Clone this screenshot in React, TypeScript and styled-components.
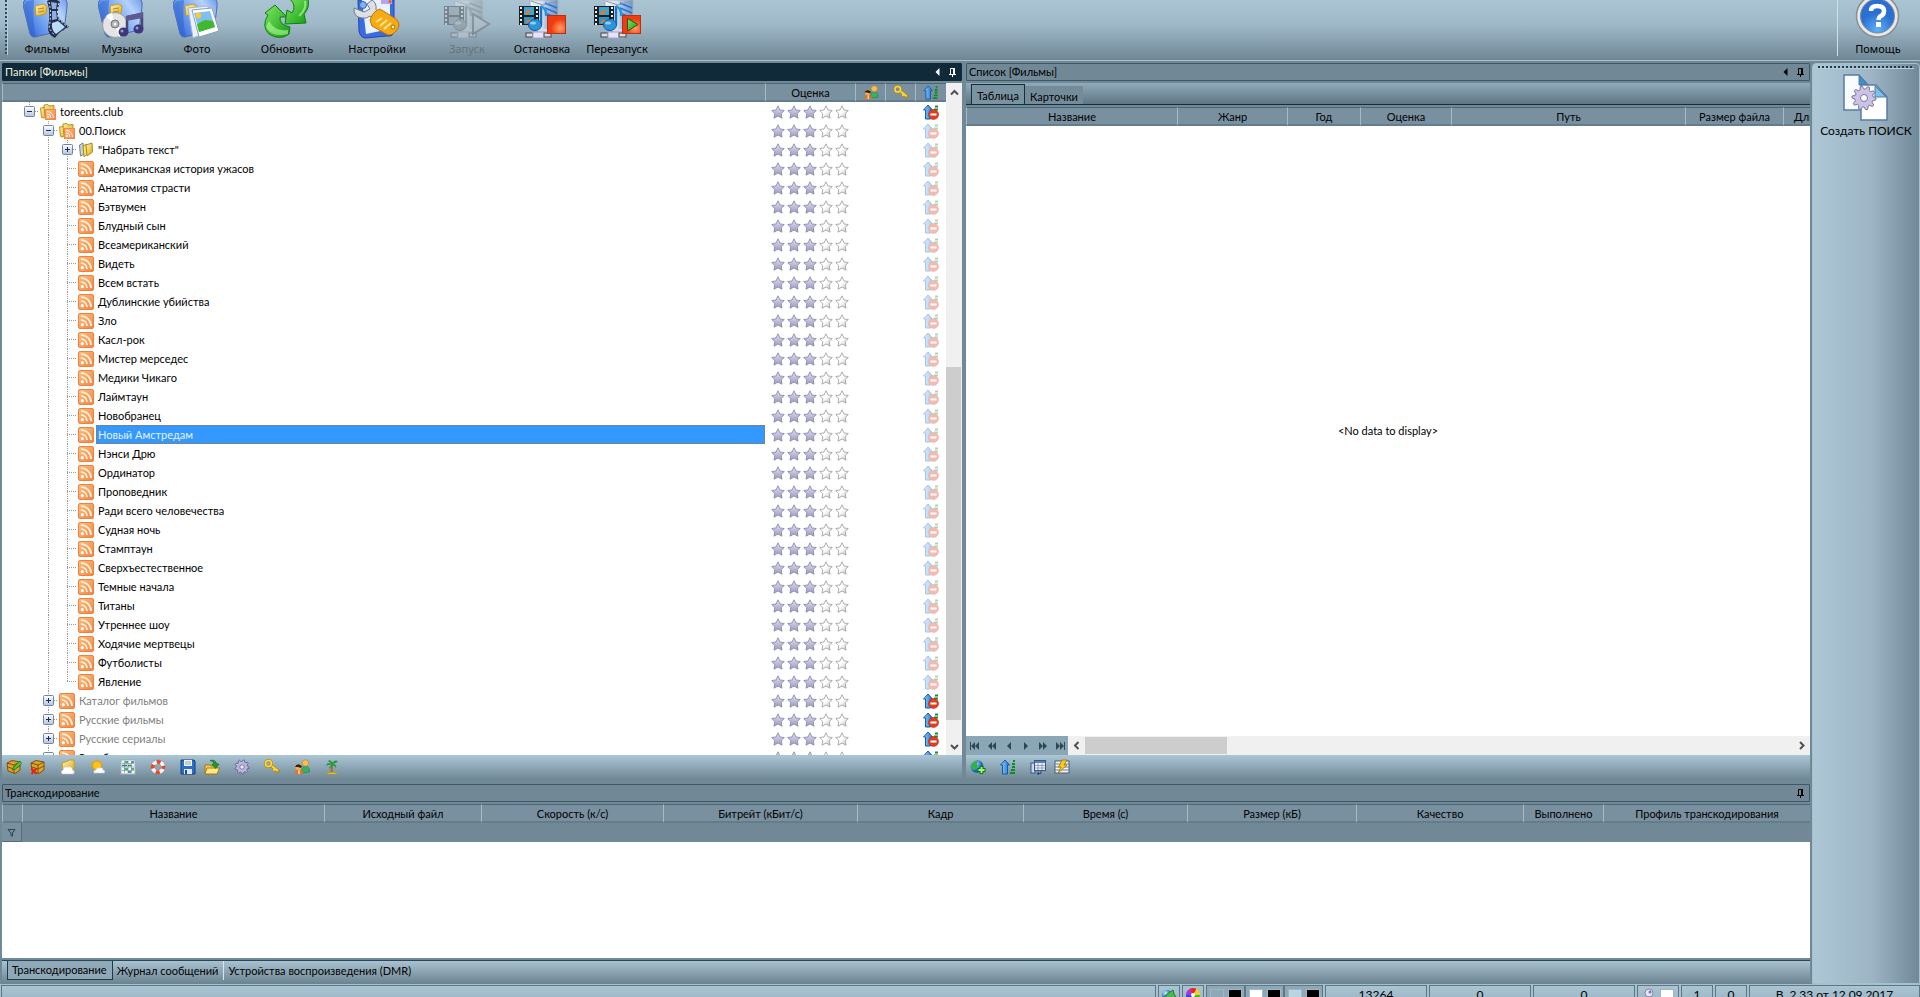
import React from 'react';
import styled, { createGlobalStyle, css } from 'styled-components';

const Global = createGlobalStyle`
  * { box-sizing: border-box; }
  body { margin: 0; overflow: hidden; background: #708897; }
  body, button, table, input { font-family: Lato, Tahoma, sans-serif; font-size: 11px; line-height: 14px; color: #000; }
  button { border: 0; padding: 0; margin: 0; background: none; }
  table { border-collapse: separate; border-spacing: 0; table-layout: fixed; }
  th { font-weight: normal; }
  th, td { padding: 0; }
`;

const mid = '#718997';

/* ---------- layout ---------- */
const Page = styled.div`
  display: flex;
  flex-direction: column;
  height: 100vh;
  background: ${mid};
`;
const Toolbar = styled.header`
  display: flex;
  flex: none;
  gap: 15px;
  height: 61px;
  padding: 0 0 0 5px;
  background: linear-gradient(#abc4d3, #a0b9c9 40%, #6f8795);
  border-bottom: 1px solid #a6c2d2;
`;
const Grip = styled.div`
  width: 3px;
  height: 55px;
  margin-right: -13px;
  border-right: 1px solid #b7cedb;
  background: repeating-linear-gradient(#2f4a5a 0 2px, transparent 2px 4px);
`;
const Group = styled.div`
  display: flex;
`;
const HelpGroup = styled.div`
  display: flex;
  height: 56px;
  margin-left: auto;
  padding: 0 4px 0 3px;
  border-left: 1px solid #cfdfe8;
`;
const BigButton = styled.button`
  display: flex;
  flex-direction: column;
  align-items: center;
  width: 74px;
  margin-right: 1px;
  font-family: "Noto Sans", sans-serif;
  white-space: nowrap;
  svg { display: block; margin-bottom: 2px; }
  &:disabled { color: #68747a; }
`;
const Body = styled.div`
  display: flex;
  flex: 1;
  min-height: 0;
`;
const Work = styled.main`
  display: flex;
  flex-direction: column;
  flex: 1;
  min-width: 0;
  padding: 2px 2px 0 2px;
`;
const Sidebar = styled.aside`
  display: flex;
  flex-direction: column;
  align-items: center;
  width: 108px;
  margin-top: 2px;
  padding: 2px;
  border: 1px solid #a5c0cf;
  border-radius: 4px 4px 0 0;
  background: linear-gradient(to right, #adc7d6, #9db5c4 55%, #708897);
`;
const SideGrip = styled.div`
  flex: none;
  width: 96px;
  height: 3px;
  margin-bottom: 5px;
  border-bottom: 1px solid #b7cedb;
  background: repeating-linear-gradient(to right, #1f3a4a 0 2px, transparent 2px 4px);
`;
const SideButton = styled.button`
  display: flex;
  flex-direction: column;
  align-items: center;
  gap: 2px;
  font-size: 12px;
  white-space: nowrap;
`;
const Upper = styled.div`
  display: grid;
  grid-template-columns: 960fr 844fr;
  column-gap: 4px;
  flex: 1;
  min-height: 0;
`;
const Panel = styled.section`
  display: flex;
  flex-direction: column;
  min-width: 0;
  min-height: 0;
`;
const PanelTitle = styled.div<{ $active?: boolean }>`
  display: flex;
  flex: none;
  align-items: center;
  gap: 8px;
  height: 18px;
  margin-bottom: 2px;
  padding: 0 4px 0 2px;
  border: 1px solid ${p => (p.$active ? '#102a3a' : '#3f5867')};
  border-radius: 1px;
  background: ${p => (p.$active ? '#102a3a' : mid)};
  color: ${p => (p.$active ? '#f2f0dc' : '#000')};
  h2 { flex: 1; margin: 0; font-size: 11px; font-weight: normal; }
  button { display: flex; color: ${p => (p.$active ? '#fff' : '#000')}; }
`;
const Split = styled.div`
  display: flex;
  flex: 1;
  min-height: 0;
  background: #fff;
`;
const Clip = styled.div<{ $fill?: boolean }>`
  flex: ${p => (p.$fill ? '1' : 'none')};
  min-width: 0;
  min-height: 0;
  overflow: hidden;
  background: #fff;
`;
const Grid = styled.table<{ $overhang?: boolean }>`
  width: ${p => (p.$overhang ? 'calc(100% + 67px)' : '100%')};
`;
const Col = styled.col<{ $w?: string }>`
  width: ${p => p.$w ?? 'auto'};
`;
const Head = styled.th`
  height: 19px;
  padding-top: 1px;
  border-top: 1px solid #4e6776;
  border-bottom: 2px solid #647d8c;
  border-left: 1px solid #a3bac7;
  background: #78909f;
  white-space: nowrap;
  overflow: hidden;
  svg { display: block; height: 15px; margin: 0 auto; }
`;
const TreeRow = styled.tr`
  height: 19px;
`;
const TreeCell = styled.div`
  display: flex;
  align-items: center;
  height: 19px;
  padding-left: 18px;
  svg { flex: none; display: block; }
`;
const Expander = styled.button`
  display: block;
  width: 19px;
  height: 19px;
`;
const NodeIcon = styled.span`
  display: block;
  width: 19px;
  padding-left: 1px;
`;
const Label = styled.span<{ $selected?: boolean; $dim?: boolean }>`
  flex: 1;
  height: 19px;
  padding-left: 1px;
  line-height: 17px;
  border: 1px dotted transparent;
  white-space: nowrap;
  color: ${p => (p.$dim ? '#808080' : '#000')};
  ${p => p.$selected && css`
    background: #3399ff;
    border-color: #b86a20;
    color: #e6f1ff;
  `}
`;
const Stars = styled.div`
  display: flex;
  gap: 2px;
  padding: 2px 0 0 6px;
`;
const Share = styled.div<{ $faded?: boolean }>`
  padding-left: 8px;
  opacity: ${p => (p.$faded ? 0.35 : 1)};
  svg { display: block; }
`;
const VScroll = styled.div`
  display: flex;
  flex-direction: column;
  width: 16px;
  background: #f0f0f0;
  button { display: flex; align-items: center; justify-content: center; height: 18px; }
`;
const VTrack = styled.div`
  flex: 1;
  padding: 0 1px 0 0;
  display: flex;
  flex-direction: column;
  &::before { content: ''; flex: 269; }
  &::after { content: ''; flex: 17; }
`;
const Thumb = styled.div`
  flex: 357;
  background: #cdcdcd;
`;
const SmallBar = styled.div`
  display: flex;
  flex: none;
  gap: 6px;
  height: 24px;
  margin-bottom: 5px;
  background: linear-gradient(#abc6d5, ${mid});
`;
const SmallButton = styled.button`
  display: flex;
  align-items: center;
  justify-content: center;
  width: 24px;
`;
const TopTabs = styled.div`
  display: flex;
  flex: none;
  align-items: flex-end;
  height: 22px;
  margin-bottom: 2px;
  padding-left: 5px;
  border-bottom: 1px solid #12303f;
  background: linear-gradient(#8faaba, #5f7785);
`;
const TopTab = styled.button<{ $active?: boolean }>`
  height: ${p => (p.$active ? 20 : 18)}px;
  padding: 2px ${p => (p.$active ? 5 : 4)}px 0;
  background: ${p => (p.$active ? '#7a93a1' : '#748c9a')};
  border: 1px solid ${p => (p.$active ? '#12303f' : 'transparent')};
  border-bottom: 0;
`;
const Empty = styled.div`
  display: flex;
  flex: 1;
  align-items: center;
  justify-content: center;
  background: #fff;
`;
const HBar = styled.div`
  display: flex;
  flex: none;
  height: 19px;
  background: #f0f0f0;
`;
const Pager = styled.div`
  display: flex;
  width: 102px;
  background: #8ba6b5;
  button { flex: 1; display: flex; align-items: center; justify-content: center; }
`;
const HScroll = styled.div`
  display: flex;
  flex: 1;
  button { display: flex; align-items: center; justify-content: center; width: 17px; }
`;
const HTrack = styled.div`
  flex: 1;
  padding: 1px 0;
`;
const HThumb = styled.div`
  width: 20%;
  height: 17px;
  background: #cdcdcd;
`;
const Lower = styled(Panel)`
  flex: none;
`;
const FilterCell = styled.td`
  height: 19px;
  background: #78909f;
  border-right: 1px solid #566e7c;
  border-bottom: 1px solid #566e7c;
  svg { display: block; margin: 0 auto; }
`;
const FilterRest = styled.td`
  background: ${mid};
`;
const Blank = styled.div`
  height: 116px;
  background: #fff;
`;
const BottomTabs = styled.div`
  display: flex;
  height: 24px;
  margin-top: 2px;
  padding-left: 5px;
  border-top: 1px solid #2b4656;
  background: linear-gradient(#a9c2d1, #6b8290);
`;
const BottomTab = styled.button<{ $active?: boolean; $divided?: boolean }>`
  height: 19px;
  padding: 0 5px 0 4px;
  background: ${p => (p.$active ? '#8fa9b8' : 'none')};
  border: solid #1d3a4a;
  border-width: ${p => (p.$active ? '0 1px 1px' : '0')};
  ${p => p.$divided && css`border-left: 1px solid #d5e6ef;`}
`;
const Status = styled.footer`
  display: flex;
  flex: none;
  gap: 2px;
  height: 13px;
  padding: 1px 0 0 1px;
  overflow: hidden;
  background: #a5c0cf;
`;
const StatusCell = styled.div<{ $w?: number; $plain?: boolean }>`
  display: flex;
  align-items: flex-start;
  justify-content: center;
  gap: 4px;
  flex: ${p => (p.$w ? 'none' : '1')};
  width: ${p => (p.$w ? `${p.$w}px` : 'auto')};
  height: 20px;
  padding-top: 2px;
  border: 1px solid #5f7785;
  background: ${p => (p.$plain ? '#8ea8b7' : 'linear-gradient(#a9c4d3, #9ab3c2)')};
  font-size: 12px;
  white-space: nowrap;
  svg { flex: none; display: block; }
`;
const Swatches = styled.div`
  display: flex;
`;
const Swatch = styled.span<{ $c: string }>`
  width: 14px;
  height: 14px;
  margin-top: 1px;
  border: 1px solid #9db7c5;
  background: ${p => p.$c};
`;
const HiddenSvg = styled.svg`
  position: absolute;
  width: 0;
  height: 0;
`;
const GreySvg = styled.svg`
  filter: grayscale(1);
  opacity: 0.35;
`;

/* ---------- icons ---------- */
const Defs = () => (
  <HiddenSvg aria-hidden="true">
    <defs>
      <linearGradient id="folder" x1="0" y1="0.6" x2="1" y2="0"><stop offset="0" stopColor="#3d70dc" /><stop offset="0.3" stopColor="#6c9ff0" /><stop offset="0.7" stopColor="#b4d2fa" /><stop offset="1" stopColor="#6b98e8" /></linearGradient>
      <linearGradient id="orange" x1="0" y1="0" x2="1" y2="1"><stop offset="0" stopColor="#fdc07c" /><stop offset="1" stopColor="#f58440" /></linearGradient>
      <linearGradient id="yellow" x1="0" y1="0" x2="1" y2="1"><stop offset="0" stopColor="#fff6b0" /><stop offset="1" stopColor="#dca61c" /></linearGradient>
      <linearGradient id="green" x1="0" y1="0" x2="1" y2="1"><stop offset="0" stopColor="#7fe860" /><stop offset="1" stopColor="#129a14" /></linearGradient>
      <linearGradient id="star" x1="0" y1="0" x2="0" y2="1"><stop offset="0" stopColor="#e2e2f0" /><stop offset="1" stopColor="#9a9ac6" /></linearGradient>
      <linearGradient id="starOff" x1="0" y1="0" x2="1" y2="1"><stop offset="0.5" stopColor="#ffffff" /><stop offset="1" stopColor="#b9b9b9" /></linearGradient>
      <linearGradient id="arrow" x1="0" y1="0" x2="1" y2="0"><stop offset="0" stopColor="#8fd4ff" /><stop offset="1" stopColor="#1d6fd0" /></linearGradient>
      <linearGradient id="server" x1="0" y1="0" x2="1" y2="0"><stop offset="0" stopColor="#eef3f8" /><stop offset="0.45" stopColor="#d5dee8" /><stop offset="0.55" stopColor="#a8c8ee" /><stop offset="1" stopColor="#6f93c4" /></linearGradient>
      <linearGradient id="box" x1="0" y1="0" x2="0" y2="1"><stop offset="0" stopColor="#fff" /><stop offset="1" stopColor="#b4c4dc" /></linearGradient>
      <radialGradient id="red" cx="0.7" cy="0.7"><stop offset="0" stopColor="#ffa06a" /><stop offset="1" stopColor="#f03c10" /></radialGradient>
      <radialGradient id="help" cx="0.5" cy="0.9"><stop offset="0" stopColor="#5fb2f8" /><stop offset="1" stopColor="#2b6fd2" /></radialGradient>
      <radialGradient id="globe" cx="0.35" cy="0.3"><stop offset="0" stopColor="#bff0ff" /><stop offset="1" stopColor="#1a69b8" /></radialGradient>
    </defs>
  </HiddenSvg>
);

const Big = ({ children }: { children: React.ReactNode }) => (
  <svg width="48" height="40" viewBox="0 0 48 40" aria-hidden="true">{children}</svg>
);
const FolderBase = () => (
  <>
    <path d="M1 1 Q2 0 6 -2 H42 Q45 2 44 7 L41 30 L12 37 Q9 38 7 34 L0 5Z" fill="url(#folder)" stroke="#4a6cb8" />
    <path d="M1 5 L8 35 L13 37 Q9 20 11 0 L4 1Z" fill="#2d5fcb" opacity="0.5" />
    <path d="M12 6 L20 4 L24 6 L23 14 L13 16Z" fill="url(#yellow)" stroke="#c79a2c" />
    <path d="M15 9 L21 8 M15 12 L21 11" stroke="#b98a20" />
  </>
);
const FilmsIcon = () => (
  <Big>
    <FolderBase />
    <path d="M24 1 Q31 -3 37 2 Q33 12 36 19 L46 27 Q37 30 32 38 Q25 35 25 28 Q28 12 24 1Z" fill="#252e48" />
    <path d="M28 2 L34 3 L33 9 L29 9Z M29 11 L33 11 L34 19 L29 20Z" fill="#8bb0ea" />
    <path d="M29 23 L35 21 L42 27 L33 34 Q28 30 29 23Z" fill="#b9dcf8" />
    <path d="M26 2 Q29 14 26 28 L32 36 M36 3 Q33 12 36 20 L45 27" stroke="#e6eef8" strokeWidth="1" strokeDasharray="2 2" fill="none" />
  </Big>
);
const MusicIcon = () => (
  <Big>
    <FolderBase />
    <circle cx="17" cy="25" r="12.5" fill="#e4e4e4" stroke="#9a9a9a" />
    <path d="M17 25 L8 16 A12 12 0 0 1 14 13Z M17 25 L27 33 A12 12 0 0 1 21 37Z" fill="#fff" />
    <circle cx="17" cy="24" r="4" fill="#aab4ba" stroke="#777" /><circle cx="17" cy="24" r="1.5" fill="#f4f4f4" />
    <path d="M29 32 V17 L44 14 V29" fill="none" stroke="#4a4878" strokeWidth="2.5" />
    <path d="M28 16 L45 12 V18 L28 21Z" fill="#5c5a8e" />
    <ellipse cx="25.5" cy="32" rx="5" ry="4.5" fill="#3a3878" /><ellipse cx="40.5" cy="29" rx="5" ry="4.5" fill="#3a3878" />
    <circle cx="24" cy="31" r="1.5" fill="#9a9ada" /><circle cx="39" cy="28" r="1.5" fill="#9a9ada" />
  </Big>
);
const PhotoIcon = () => (
  <Big>
    <FolderBase />
    <path d="M15 8 L35 6 L38 31 L20 38Z" fill="#e9f1fb" stroke="#a8b6c8" />
    <path d="M19 10 L39 8 L46 31 L26 37Z" fill="#fff" stroke="#8f9fb6" />
    <path d="M21 13 L37 11 L42 27 L26 32Z" fill="#7cc0f4" />
    <path d="M24 24 L32 20 L40 21 L42 27 L26 32Z" fill="#41b82e" />
    <circle cx="25.5" cy="15.5" r="2.8" fill="#ffc928" />
  </Big>
);
const RefreshIcon = () => (
  <Big>
    <path d="M2 13 L12 5 L24 17 L17 17 Q16 25 27 27 L26 34 Q17 41 6 34 Q-2 26 5 15Z" fill="url(#green)" stroke="#0d7f12" />
    <path d="M27 -1 H45 Q47 8 41 14 L43 23 L22 24 L24 10 L29 13 Q34 6 27 -1Z" fill="url(#green)" stroke="#0d7f12" />
    <path d="M3 27 Q9 38 25 34 L25 30 Q12 32 6 21Z" fill="#b8fa9a" opacity="0.6" />
    <path d="M42 1 Q44 9 36 16" stroke="#c4ffa8" strokeWidth="2" fill="none" opacity="0.6" />
  </Big>
);
const SettingsIcon = () => (
  <Big>
    <path d="M5 0 H41 V30 Q41 37 34 36 L12 38 Q7 37 6 31Z" fill="#3b6be0" stroke="#2148ae" />
    <path d="M9 0 H37 V29 L13 34Z" fill="#e9f2ff" />
    <path d="M28 0 H39 V4 H28Z" fill="#b8a4ee" /><circle cx="37" cy="1.5" r="1.5" fill="#f4512c" />
    <path d="M1 8 Q0 17 9 18 Q14 19 17 16 L28 25 L33 19 L23 10 Q24 3 19 0 L14 4 L17 9 L11 12Z" fill="#dde0e4" stroke="#747d88" />
    <circle cx="10" cy="5" r="3.5" fill="#7fb3f3" stroke="#3c63a8" />
    <path d="M17 20 Q20 11 27 9 L43 19 Q49 25 43 31 Q38 37 33 34 L19 26Z" fill="#f8a914" stroke="#b87606" />
    <path d="M23 22 L29 18 M27 26 L34 20 M31 29 L38 23" stroke="#ffe890" strokeWidth="2" />
    <circle cx="40" cy="27" r="2" fill="#fff0b8" stroke="#a86d08" />
  </Big>
);
const ServerBase = () => (
  <>
    <path d="M12 0 H40 V26 L33 32 H20 L12 27Z" fill="url(#server)" stroke="#a5afbc" />
    <path d="M27 3 L39 8 M27 8 L39 13 M27 13 L39 18" stroke="#2b73cc" strokeWidth="1.5" />
    <path d="M13 1 L25 5 L39 1" stroke="#8d9aa8" fill="none" />
    <rect x="1" y="6" width="20" height="19" fill="#1b1e22" />
    <path d="M3 7 V25 M19 7 V25" stroke="#e8eef2" strokeWidth="2" strokeDasharray="2 2" />
    <rect x="6" y="7" width="10" height="8" fill="#3ca7d4" /><rect x="6" y="17" width="10" height="7" fill="#3295c8" />
    <path d="M7 14 Q10 7 15 12 L12 11 L10 15Z M7 23 Q11 17 15 22Z" fill="#e97a23" />
    <path d="M23 6 L23 25" stroke="#1676c4" strokeWidth="2.5" /><path d="M23 6 Q29 9 28 16" stroke="#2a94de" strokeWidth="2.5" fill="none" />
    <ellipse cx="17" cy="25" rx="6.5" ry="5.5" fill="#2d93dc" stroke="#155f9f" /><ellipse cx="15" cy="23" rx="3" ry="1.5" fill="#8bd0fa" />
    <path d="M22 29 H31 V38 H22Z" fill="#dcd9f0" />
    <rect x="8" y="33" width="7" height="4" fill="#d8dde2" stroke="#444" /><rect x="15" y="32" width="17" height="6" fill="#e6e3f8" stroke="#a7a4c4" /><rect x="26" y="33" width="7" height="4" fill="#d8dde2" stroke="#444" />
  </>
);
const StartIcon = () => (
  <GreySvg width="48" height="40" viewBox="0 0 48 40" aria-hidden="true">
    <ServerBase /><path d="M30 14 L46 24 L30 34Z" fill="#c0c8cc" stroke="#555" strokeWidth="2" />
  </GreySvg>
);
const StopIcon = () => (
  <Big><ServerBase /><rect x="29.5" y="15.5" width="18" height="18" fill="url(#red)" stroke="#b93210" /></Big>
);
const RestartIcon = () => (
  <Big><ServerBase /><rect x="29.5" y="15.5" width="18" height="18" fill="url(#red)" stroke="#b93210" /><path d="M34.5 18.500 L45 24.500 L34.500 31Z" fill="url(#green)" stroke="#34500c" /></Big>
);
const HelpIcon = () => (
  <Big>
    <circle cx="23.5" cy="16" r="21" fill="#e8e8e6" stroke="#8a8f92" strokeWidth="1.5" />
    <circle cx="23.5" cy="16" r="17" fill="url(#help)" stroke="#7d8a9a" />
    <path d="M17 11 Q17 6 23 6 Q30 6 30 11 Q30 15 26 16.500 Q24.500 18 24.500 20" fill="none" stroke="#fff" strokeWidth="4.5" />
    <rect x="22" y="22" width="5" height="5" fill="#fff" />
  </Big>
);
const gearPath = (cx: number, cy: number, r: number, inner: number, teeth: number) => {
  const pts: string[] = [];
  for (let i = 0; i < teeth * 4; i++) {
    const a = (i / (teeth * 4)) * Math.PI * 2;
    const rad = i % 4 < 2 ? r : inner;
    pts.push(`${(cx + Math.cos(a) * rad).toFixed(1)} ${(cy + Math.sin(a) * rad).toFixed(1)}`);
  }
  return `M${pts.join('L')}Z`;
};
const SearchDocIcon = () => (
  <svg width="46" height="48" viewBox="0 0 46 48" aria-hidden="true">
    <path d="M1 1 H16 L25 11 V36 H1Z" fill="#f8fbff" stroke="#557ca6" strokeWidth="1.5" />
    <path d="M16 1 V11 H25Z" fill="#3d8fc8" stroke="#557ca6" />
    <path d="M18 11 H33 L44 23 V46 H18Z" fill="#fff" stroke="#557ca6" strokeWidth="1.5" />
    <path d="M32 12 V23 H43Z" fill="#79c2ea" stroke="#557ca6" />
    <path d={gearPath(21, 24, 12, 9, 10)} fill="#c9c4e4" stroke="#7a74a0" />
    <circle cx="21" cy="24" r="3.5" fill="#fff" stroke="#7a74a0" />
  </svg>
);

const S = ({ children }: { children: React.ReactNode }) => (
  <svg width="16" height="16" viewBox="0 0 16 16" aria-hidden="true">{children}</svg>
);
const Rss = () => (
  <S>
    <rect x="0.5" y="0.5" width="15" height="15" rx="1.5" fill="url(#orange)" stroke="#ee8240" />
    <circle cx="4.3" cy="11.7" r="1.6" fill="#fff" />
    <path d="M3 7 A6 6 0 0 1 9 13 M3 3 A10 10 0 0 1 13 13" fill="none" stroke="#fff4e4" strokeWidth="1.7" />
  </S>
);
const RssFolder = () => (
  <S>
    <path d="M0.5 4 L4 3.500 V1 L8 0.500 L9 2 L14 1.500 V8 L4 14 L1.500 13.500Z" fill="url(#yellow)" stroke="#c28f16" />
    <path d="M4 3 L5 13" stroke="#c28f16" />
    <rect x="5.5" y="5.5" width="10" height="10" fill="url(#orange)" stroke="#ee8a4c" />
    <circle cx="8" cy="13" r="1" fill="#fff" />
    <path d="M7 10 A4 4 0 0 1 11 14 M7 7.500 A6.500 6.500 0 0 1 13.500 14" fill="none" stroke="#fff" />
  </S>
);
const DocFolder = () => (
  <S>
    <path d="M1.5 3 L5 1 L6 12 L2.500 14Z" fill="#c9d4dc" stroke="#73828e" />
    <path d="M5 4 L9 2 V12 L6 15Z" fill="#f6e268" stroke="#ab8c18" />
    <path d="M8 3 L14 1 L14.500 10 L9 14Z" fill="url(#yellow)" stroke="#ab8c18" />
  </S>
);
const starD = 'M7 0.8 L9 5 L13.3 5.5 L10.2 8.6 L11 13.2 L7 11 L3 13.2 L3.8 8.6 L0.7 5.5 L5 5Z';
const Star = ({ on }: { on: boolean }) => (
  <svg width="14" height="15" viewBox="0 0 14 15" aria-hidden="true">
    <path d={starD} fill={on ? 'url(#star)' : 'url(#starOff)'} stroke={on ? '#8c8cab' : '#a5a5a5'} strokeWidth="0.9" strokeLinejoin="round" />
  </svg>
);
const UpArrow = () => <path d="M5 1 L9.5 6 H7.5 V15 H2.500 V6 H0.500Z" fill="url(#arrow)" stroke="#155ba5" />;
const ShareStop = () => (
  <S><UpArrow /><path d="M12 2.5 H15 M11 5.5 H15" stroke="#1d8a30" strokeWidth="2" />
    <circle cx="10.5" cy="10.5" r="5" fill="#dc3f22" stroke="#b52a12" strokeWidth="0.6" /><rect x="7.5" y="9.5" width="6" height="2" fill="#fff" /></S>
);
const Sort = () => (
  <S><UpArrow /><path d="M13 2 H15 M12 5 H15 M12 8 H15 M11 11 H15 M10 14 H15" stroke="#128a1e" strokeWidth="2" /></S>
);
const People = () => (
  <S>
    <path d="M8 14 Q7 7 12 7 Q16 8 15.5 13Z" fill="#36b06a" stroke="#1e7f45" strokeWidth="0.6" /><circle cx="11.5" cy="4" r="3.3" fill="#f3bd58" stroke="#b9801c" strokeWidth="0.6" />
    <path d="M1 15 Q1 10 5 10 Q9 10 9 15Z" fill="#e0761e" /><path d="M5 11 V15" stroke="#fff" /><circle cx="4.5" cy="8" r="3" fill="#f0ae58" /><path d="M1 8 Q3 3 8 7 L7 9 L4 8Z" fill="#2e2012" />
  </S>
);
const KeyIcon = () => (
  <S><path d="M7 6.5 L14 12 L12.5 13.5 M11 10 L9.5 12" stroke="#b88a10" strokeWidth="3.4" fill="none" /><path d="M7 6.5 L14 12 M11 10 L9.5 11.5" stroke="#f8d848" strokeWidth="2" fill="none" />
    <circle cx="4.5" cy="4.5" r="3" fill="none" stroke="#b88a10" strokeWidth="3" /><circle cx="4.5" cy="4.5" r="3" fill="none" stroke="#f8dc50" strokeWidth="1.6" /></S>
);
const Crate = ({ edit }: { edit?: boolean }) => (
  <S>
    <path d="M1 4 L6 1.5 L14 3 V11 L9 14.5 L2 12Z" fill="#e0a22a" stroke="#7d5208" />
    <path d="M1 4 L8 6 L14 3 M8 6 V14 M2 8 L8 10 L14 7" stroke="#7d5208" fill="none" />
    {edit ? <path d="M6 11 L8 8 L14 2 L15.5 4.5 L9.5 10Z" fill="#4fcb3c" stroke="#147a14" strokeWidth="0.8" />
      : <path d="M1.5 9.500 L6.500 15 M6.500 9.500 L1.500 15" stroke="#e32414" strokeWidth="2" />}
  </S>
);
const CloudFolder = () => (
  <S><path d="M2 4 L8 2 L9 1 L14 1 L14.5 10 L3 12Z" fill="url(#yellow)" stroke="#c49a2c" /><path d="M2 15 Q0 12 3 11 Q4 7 8 8 Q12 7 12.5 11 Q15.5 12 13.5 15Z" fill="#fff" stroke="#b8c4cc" strokeWidth="0.6" /></S>
);
const SunCloud = () => (
  <S><circle cx="7" cy="6.5" r="4.5" fill="#ffc414" stroke="#f09000" /><path d="M6 0 V1.5 M1 2 L2.5 3.5 M0 7 H1.5 M12 2 L11 3" stroke="#f0a010" /><path d="M4 14 Q3 11 6 11 Q7 8 10 9 Q13 8 13 11 Q16 12 14 14Z" fill="#fff" stroke="#c6d2da" strokeWidth="0.6" /></S>
);
const Calendar = () => (
  <S><rect x="1" y="1" width="14" height="14" fill="#f4f8fc" stroke="#9fb0bd" /><path d="M2 4.5 H14 M2 8 H14 M2 11.5 H14 M4.5 2 V14 M8 2 V14 M11.5 2 V14" stroke="#8096a5" strokeWidth="0.7" />
    <path d="M5 3 H8 M2 6.5 H4.5 M8 6.5 H11.5 M4.5 10 H8 M11.5 10 H14" stroke="#1d9a3c" strokeWidth="1.6" /><path d="M11.5 3 H14 M4.5 6.5 H7 M8 13 H11" stroke="#2866b8" strokeWidth="1.6" /></S>
);
const Lifebuoy = () => (
  <S><circle cx="8" cy="8" r="5.2" fill="none" stroke="#8a8f94" strokeWidth="4.6" /><circle cx="8" cy="8" r="5.2" fill="none" stroke="#f7f7f7" strokeWidth="3.8" /><circle cx="8" cy="8" r="5.2" fill="none" stroke="#e2492f" strokeWidth="3.8" strokeDasharray="4.08 4.08" strokeDashoffset="2" /></S>
);
const Disk = () => (
  <S><path d="M1 1 H14 L15 2 V15 H1Z" fill="#2b6fc4" stroke="#0f3e84" /><rect x="4" y="1" width="8" height="6" fill="#f4f8fc" /><path d="M5 3 H11 M5 5 H11" stroke="#8fa5b8" /><rect x="4" y="10" width="8" height="5" fill="#dfe8f0" /><rect x="5" y="11" width="2" height="4" fill="#1c4a90" /></S>
);
const OpenFolder = () => (
  <S><path d="M1 6 H6 L7 7 H13 V15 H1Z" fill="#f3cc50" stroke="#a87c0c" /><path d="M1 15 L3 9 H15.5 L13 15Z" fill="#fce888" stroke="#a87c0c" /><path d="M6 1.5 Q12 0 12.5 5 H15 L11.5 9.5 L8 5 H10 Q10 2 6 1.5Z" fill="#1f9a2c" stroke="#0c6a18" strokeWidth="0.6" /></S>
);
const Gear = () => (
  <S><path d={gearPath(8, 8, 7.2, 5.4, 9)} fill="#b9b8dc" stroke="#65639a" strokeWidth="0.9" /><circle cx="8" cy="8" r="2.2" fill="#e9f1f6" stroke="#65639a" strokeWidth="0.8" /></S>
);
const Palm = () => (
  <S><path d="M8 6 L7.5 14" stroke="#a86a1c" strokeWidth="2" /><path d="M2 15 Q8 11.5 14 15Z" fill="#f4cf3c" stroke="#bd9310" strokeWidth="0.6" /><path d="M8 5 Q3 2 2 7 Q5 5 8 6 Q5 7 5 10 Q7 8 8.5 6 Q11 7 12 9 Q13 5 9 5 Q13 3 14 3 Q12 0 8.5 3.5 Q6 0 4 2Z" fill="#1f9c3a" /></S>
);
const GlobeAdd = () => (
  <S><circle cx="7" cy="7.5" r="6.5" fill="url(#globe)" /><path d="M1 6 Q4 1 8 1.5 Q6 5 8 7 Q4 13 1.5 10Z" fill="#38b048" /><path d="M11.5 7 V15 M7.500 11 H15.500" stroke="#0f7a10" strokeWidth="3.8" /><path d="M11.500 8 V14 M8.500 11 H14.500" stroke="#a8f47c" strokeWidth="1.8" /></S>
);
const Columns = () => (
  <S><rect x="1" y="4" width="4" height="10" fill="#c8d6e8" stroke="#3c5488" /><rect x="4.5" y="1.5" width="11" height="10" fill="#f2f6fb" stroke="#3c5488" /><rect x="5" y="2" width="10" height="2" fill="#5f7fc0" /><path d="M8 4 V11 M12 4 V11 M5 6.500 H15 M5 9 H15" stroke="#6c7fa6" strokeWidth="0.7" /><path d="M11 12 V14.500 H7 M9 13 L7 14.500 L9 16" stroke="#22469a" fill="none" /></S>
);
const Bolt = () => (
  <S><rect x="1" y="2" width="14" height="12" fill="#f2f5f8" stroke="#4c5c70" /><path d="M1 5 H15 M1 8 H15 M1 11 H15" stroke="#6c7f90" /><path d="M8 1 H13 L10 6 H13 L4 14 L7 8 H4.500Z" fill="#fcc81c" stroke="#a87408" strokeWidth="0.8" /></S>
);
const Pin = () => <svg width="9" height="9" viewBox="0 0 9 9" aria-hidden="true"><path d="M2.5 6 V0.5 H6 V6 M1 6.5 H8 M4.5 7 V9" stroke="currentColor" fill="none" /><path d="M6 0 V6" stroke="currentColor" strokeWidth="2" /></svg>;
const Back = () => <svg width="5" height="8" viewBox="0 0 5 8" aria-hidden="true"><path d="M4.5 0 V8 L0.5 4Z" fill="currentColor" /></svg>;
const Chevron = ({ d }: { d: string }) => <svg width="9" height="9" viewBox="0 0 9 9" aria-hidden="true"><path d={d} fill="none" stroke="#505050" strokeWidth="2" /></svg>;
const PagerIcon = ({ d }: { d: string }) => <svg width="10" height="8" viewBox="0 0 10 8" aria-hidden="true"><path d={d} fill="#2f4858" /></svg>;

type GuideKind = 'blank' | 'line' | 'tee' | 'end';
const guideD: Record<GuideKind, string> = {
  blank: '',
  line: 'M9.5 0V19',
  tee: 'M9.5 0V19M9 9.5H19',
  end: 'M9.5 0V10M9 9.5H19',
};
const Guide = ({ kind, box }: { kind: GuideKind; box?: '+' | '-' }) => (
  <svg width="19" height="19" viewBox="0 0 19 19" aria-hidden="true">
    <path d={guideD[kind]} stroke="#9a9a9a" strokeDasharray="1 1" fill="none" />
    {box && <><rect x="4.5" y="4.5" width="10" height="10" rx="1" fill="url(#box)" stroke="#7184a4" />
      <path d={box === '+' ? 'M7 9.5H12M9.5 7V12' : 'M7 9.5H12'} stroke="#1c2c50" /></>}
  </svg>
);

/* ---------- data ---------- */
type Node = { name: string; guides: GuideKind[]; box?: '+' | '-'; icon: 'rss' | 'rssFolder' | 'doc'; dim?: boolean; solid?: boolean };
const shows = [
  'Американская история ужасов', 'Анатомия страсти', 'Бэтвумен', 'Блудный сын', 'Всеамериканский', 'Видеть', 'Всем встать',
  'Дублинские убийства', 'Зло', 'Касл-рок', 'Мистер мерседес', 'Медики Чикаго', 'Лаймтаун', 'Новобранец', 'Новый Амстредам',
  'Нэнси Дрю', 'Ординатор', 'Проповедник', 'Ради всего человечества', 'Судная ночь', 'Стамптаун', 'Сверхъестественное',
  'Темные начала', 'Титаны', 'Утреннее шоу', 'Ходячие мертвецы', 'Футболисты', 'Явление',
];
const nodes: Node[] = [
  { name: 'toreents.club', guides: ['end'], box: '-', icon: 'rssFolder', solid: true },
  { name: '00.Поиск', guides: ['blank', 'tee'], box: '-', icon: 'rssFolder' },
  { name: '"Набрать текст"', guides: ['blank', 'line', 'tee'], box: '+', icon: 'doc' },
  ...shows.map((name, i): Node => ({ name, guides: ['blank', 'line', i === shows.length - 1 ? 'end' : 'tee'], icon: 'rss' })),
  ...['Каталог фильмов', 'Русские фильмы', 'Русские сериалы'].map((name): Node => ({ name, guides: ['blank', 'tee'], box: '+', icon: 'rss', dim: true, solid: true })),
  { name: 'Зарубежные', guides: ['blank', 'tee'], box: '+', icon: 'rss', solid: true },
];
const nodeIcons = { rss: <Rss />, rssFolder: <RssFolder />, doc: <DocFolder /> };

const listCols: [string, string?][] = [['Название'], ['Жанр', '110px'], ['Год', '73px'], ['Оценка', '91px'], ['Путь', '234px'], ['Размер файла', '98px'], ['Длительность', '94px']];
const jobCols: [string, number][] = [['Название', 302], ['Исходный файл', 157], ['Скорость (к/с)', 182], ['Битрейт (кБит/с)', 194], ['Кадр', 166], ['Время (с)', 164], ['Размер (кБ)', 169], ['Качество', 167], ['Выполнено', 80], ['Профиль транскодирования', 207]];

const Tool = ({ label, icon, disabled }: { label: string; icon: React.ReactNode; disabled?: boolean }) => (
  <BigButton type="button" disabled={disabled}>{icon}{label}</BigButton>
);
const Mini = ({ items }: { items: [string, React.ReactNode][][] }) => (
  <SmallBar>
    {items.map((g, i) => (
      <Group key={i}>{g.map(([t, icon]) => <SmallButton type="button" key={t} aria-label={t}>{icon}</SmallButton>)}</Group>
    ))}
  </SmallBar>
);

export default function App() {
  return (
    <Page>
      <Global />
      <Defs />
      <Toolbar>
        <Grip />
        <Group>
          <Tool label="Фильмы" icon={<FilmsIcon />} />
          <Tool label="Музыка" icon={<MusicIcon />} />
          <Tool label="Фото" icon={<PhotoIcon />} />
        </Group>
        <Tool label="Обновить" icon={<RefreshIcon />} />
        <Tool label="Настройки" icon={<SettingsIcon />} />
        <Group>
          <Tool label="Запуск" icon={<StartIcon />} disabled />
          <Tool label="Остановка" icon={<StopIcon />} />
          <Tool label="Перезапуск" icon={<RestartIcon />} />
        </Group>
        <HelpGroup><Tool label="Помощь" icon={<HelpIcon />} /></HelpGroup>
      </Toolbar>

      <Body>
        <Work>
          <Upper>
            <Panel>
              <PanelTitle $active>
                <h2>Папки [Фильмы]</h2>
                <button type="button" aria-label="Свернуть"><Back /></button>
                <button type="button" aria-label="Закрепить"><Pin /></button>
              </PanelTitle>
              <Split>
                <Clip $fill>
                  <Grid>
                    <colgroup><Col /><Col $w="90px" /><Col $w="30px" /><Col $w="30px" /><Col $w="31px" /></colgroup>
                    <thead>
                      <tr>
                        <Head aria-label="Папка" /><Head>Оценка</Head>
                        <Head aria-label="Доступ"><People /></Head><Head aria-label="Ключ"><KeyIcon /></Head><Head aria-label="Сортировка"><Sort /></Head>
                      </tr>
                    </thead>
                    <tbody>
                      {nodes.map(n => (
                        <TreeRow key={n.name}>
                          <td>
                            <TreeCell>
                              {n.guides.map((g, i) => {
                                const last = i === n.guides.length - 1;
                                return last && n.box
                                  ? <Expander type="button" key={i} aria-label={n.box === '+' ? 'Развернуть' : 'Свернуть'}><Guide kind={g} box={n.box} /></Expander>
                                  : <Guide key={i} kind={g} />;
                              })}
                              <NodeIcon>{nodeIcons[n.icon]}</NodeIcon>
                              <Label $dim={n.dim} $selected={n.name === 'Новый Амстредам'}>{n.name}</Label>
                            </TreeCell>
                          </td>
                          <td><Stars>{[0, 1, 2, 3, 4].map(i => <Star key={i} on={i < 3} />)}</Stars></td>
                          <td /><td />
                          <td><Share $faded={!n.solid}><ShareStop /></Share></td>
                        </TreeRow>
                      ))}
                    </tbody>
                  </Grid>
                </Clip>
                <VScroll>
                  <button type="button" aria-label="Вверх"><Chevron d="M1 6.5 L4.5 3 L8 6.5" /></button>
                  <VTrack><Thumb /></VTrack>
                  <button type="button" aria-label="Вниз"><Chevron d="M1 3 L4.5 6.5 L8 3" /></button>
                </VScroll>
              </Split>
              <Mini items={[
                [['Изменить', <Crate edit />], ['Удалить', <Crate />]],
                [['Облако', <CloudFolder />]], [['Погода', <SunCloud />]], [['Календарь', <Calendar />]], [['Поддержка', <Lifebuoy />]],
                [['Сохранить', <Disk />], ['Открыть', <OpenFolder />]],
                [['Параметры', <Gear />]], [['Ключ', <KeyIcon />]], [['Доступ', <People />]], [['Пальма', <Palm />]],
              ]} />
            </Panel>

            <Panel>
              <PanelTitle>
                <h2>Список [Фильмы]</h2>
                <button type="button" aria-label="Свернуть"><Back /></button>
                <button type="button" aria-label="Закрепить"><Pin /></button>
              </PanelTitle>
              <TopTabs role="tablist">
                <TopTab type="button" role="tab" aria-selected $active>Таблица</TopTab>
                <TopTab type="button" role="tab">Карточки</TopTab>
              </TopTabs>
              <Clip>
                <Grid $overhang>
                  <colgroup>{listCols.map(([n, w]) => <Col key={n} $w={w} />)}</colgroup>
                  <thead><tr>{listCols.map(([n]) => <Head key={n}>{n}</Head>)}</tr></thead>
                </Grid>
              </Clip>
              <Empty>&lt;No data to display&gt;</Empty>
              <HBar>
                <Pager>
                  <button type="button" aria-label="Первая"><PagerIcon d="M0 0H1V8H0ZM5 0V8L1 4ZM9 0V8L5 4Z" /></button>
                  <button type="button" aria-label="Назад на страницу"><PagerIcon d="M5 0V8L1 4ZM9 0V8L5 4Z" /></button>
                  <button type="button" aria-label="Назад"><PagerIcon d="M7 0V8L3 4Z" /></button>
                  <button type="button" aria-label="Вперёд"><PagerIcon d="M3 0V8L7 4Z" /></button>
                  <button type="button" aria-label="Вперёд на страницу"><PagerIcon d="M1 0V8L5 4ZM5 0V8L9 4Z" /></button>
                  <button type="button" aria-label="Последняя"><PagerIcon d="M1 0V8L5 4ZM5 0V8L9 4ZM9 0H10V8H9Z" /></button>
                </Pager>
                <HScroll>
                  <button type="button" aria-label="Влево"><Chevron d="M6.5 1 L3 4.5 L6.5 8" /></button>
                  <HTrack><HThumb /></HTrack>
                  <button type="button" aria-label="Вправо"><Chevron d="M3 1 L6.5 4.5 L3 8" /></button>
                </HScroll>
              </HBar>
              <Mini items={[[['Добавить', <GlobeAdd />]], [['Сортировка', <Sort />]], [['Столбцы', <Columns />], ['Быстро', <Bolt />]]]} />
            </Panel>
          </Upper>

          <Lower>
            <PanelTitle>
              <h2>Транскодирование</h2>
              <button type="button" aria-label="Закрепить"><Pin /></button>
            </PanelTitle>
            <Grid>
              <colgroup><Col $w="20px" />{jobCols.map(([n, w]) => <Col key={n} $w={`${w / 18.08}%`} />)}</colgroup>
              <thead><tr><Head />{jobCols.map(([n]) => <Head key={n}>{n}</Head>)}</tr></thead>
              <tbody>
                <tr>
                  <FilterCell><svg width="9" height="9" viewBox="0 0 9 9" aria-hidden="true"><path d="M1 1.5 H8 L5.5 5 V8 H4 V5Z" fill="none" stroke="#2c4452" /></svg></FilterCell>
                  <FilterRest colSpan={10} />
                </tr>
              </tbody>
            </Grid>
            <Blank />
            <BottomTabs role="tablist">
              <BottomTab type="button" role="tab" aria-selected $active>Транскодирование</BottomTab>
              <BottomTab type="button" role="tab">Журнал сообщений</BottomTab>
              <BottomTab type="button" role="tab" $divided>Устройства воспроизведения (DMR)</BottomTab>
            </BottomTabs>
          </Lower>
        </Work>
        <Sidebar>
          <SideGrip />
          <SideButton type="button"><SearchDocIcon />Создать ПОИСК</SideButton>
        </Sidebar>
      </Body>

      <Status>
        <StatusCell />
        <StatusCell $w={22}><svg width="16" height="16" viewBox="0 0 16 16" aria-hidden="true"><circle cx="6" cy="7" r="5" fill="url(#globe)" /><path d="M4 8 L9 4 L12 2 L13 6 L15 9 L9 14 L4 13Z" fill="#4cb848" stroke="#1c7a2c" /></svg></StatusCell>
        <StatusCell $w={22}>
          <svg width="14" height="14" viewBox="0 0 14 14" aria-hidden="true">
            <path d="M7 7 L0 7 A7 7 0 0 1 3.5 1Z" fill="#b030e0" /><path d="M7 7 L3.5 1 A7 7 0 0 1 10.5 1Z" fill="#e82424" /><path d="M7 7 L10.5 1 A7 7 0 0 1 14 7Z" fill="#f8d020" />
            <path d="M7 7 L14 7 A7 7 0 0 1 10.5 13Z" fill="#38c038" /><path d="M7 7 L10.5 13 A7 7 0 0 1 3.5 13Z" fill="#20b8d8" /><path d="M7 7 L3.5 13 A7 7 0 0 1 0 7Z" fill="#3048e0" /><circle cx="7" cy="7" r="2" fill="#fff" />
          </svg>
        </StatusCell>
        <Swatches>
          {['#8ea8b7', '#ffffff', '#b9d4e3'].map(c => <StatusCell $w={39} $plain key={c}><Swatch $c={c} /><Swatch $c="#000000" /></StatusCell>)}
        </Swatches>
        <StatusCell $w={102}>13264</StatusCell>
        <StatusCell $w={102}>0</StatusCell>
        <StatusCell $w={102}>0</StatusCell>
        <StatusCell $w={42}>
          <svg width="14" height="14" viewBox="0 0 14 14" aria-hidden="true"><circle cx="7" cy="5" r="4" fill="#e8e4f4" stroke="#8b86a8" /><circle cx="8" cy="4" r="1.5" fill="#7777aa" /><path d="M2 13 Q3 8 7 9 Q11 8 12 13Z" fill="#fff" stroke="#8b86a8" /></svg>
          <Swatch $c="#ffffff" />
        </StatusCell>
        <StatusCell $w={32}>1</StatusCell>
        <StatusCell $w={32}>0</StatusCell>
        <StatusCell $w={171}>В. 2.33 от 12.09.2017</StatusCell>
      </Status>
    </Page>
  );
}
